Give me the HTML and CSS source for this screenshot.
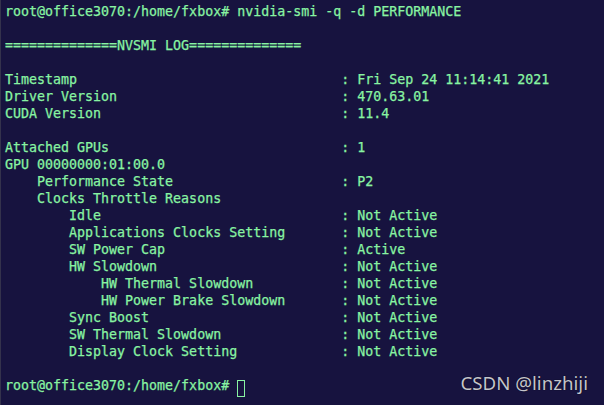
FILE: index.html
```html
<!DOCTYPE html>
<html>
<head>
<meta charset="utf-8">
<link rel="stylesheet" href="styles.css">
</head>
<body>
<div class="term">
<pre class="out">root@office3070:/home/fxbox# nvidia-smi -q -d PERFORMANCE

==============NVSMI LOG==============

Timestamp                                 : Fri Sep 24 11:14:41 2021
Driver Version                            : 470.63.01
CUDA Version                              : 11.4

Attached GPUs                             : 1
GPU 00000000:01:00.0
    Performance State                     : P2
    Clocks Throttle Reasons
        Idle                              : Not Active
        Applications Clocks Setting       : Not Active
        SW Power Cap                      : Active
        HW Slowdown                       : Not Active
            HW Thermal Slowdown           : Not Active
            HW Power Brake Slowdown       : Not Active
        Sync Boost                        : Not Active
        SW Thermal Slowdown               : Not Active
        Display Clock Setting             : Not Active</pre>
<div class="last">
<pre class="out prompt">root@office3070:/home/fxbox# <span class="cursor"> </span></pre>
<div class="mark">CSDN @linzhiji</div>
</div>
</div>
</body>
</html>
```
FILE: styles.css
```css
html, body {
  margin: 0;
  padding: 0;
  width: 604px;
  height: 405px;
  overflow: hidden;
  background: #17133f;
}
.term {
  width: 603px;
  height: 405px;
  border-left: 1px solid #34324c;
}
.out {
  margin: 0;
  padding: 3px 0 0 4px;
  font-family: "DejaVu Sans Mono", monospace;
  font-size: 13.3px;
  line-height: 17px;
  color: #88f3a2;
  -webkit-text-stroke: 0.25px #88f3a2;
}
.last {
  display: flex;
  justify-content: space-between;
  align-items: flex-start;
  margin-top: 17px;
  padding-right: 16px;
}
.prompt {
  padding-top: 0;
}
.cursor {
  display: inline-block;
  width: 6px;
  height: 15px;
  border: 1.5px solid #88f3a2;
  vertical-align: -4px;
}
.mark {
  margin-top: -6px;
  font-family: "Noto Sans", "DejaVu Sans", sans-serif;
  font-size: 18.7px;
  line-height: 24px;
  color: #c4c4cc;
  text-shadow: 0 0 1px #000;
}
```
